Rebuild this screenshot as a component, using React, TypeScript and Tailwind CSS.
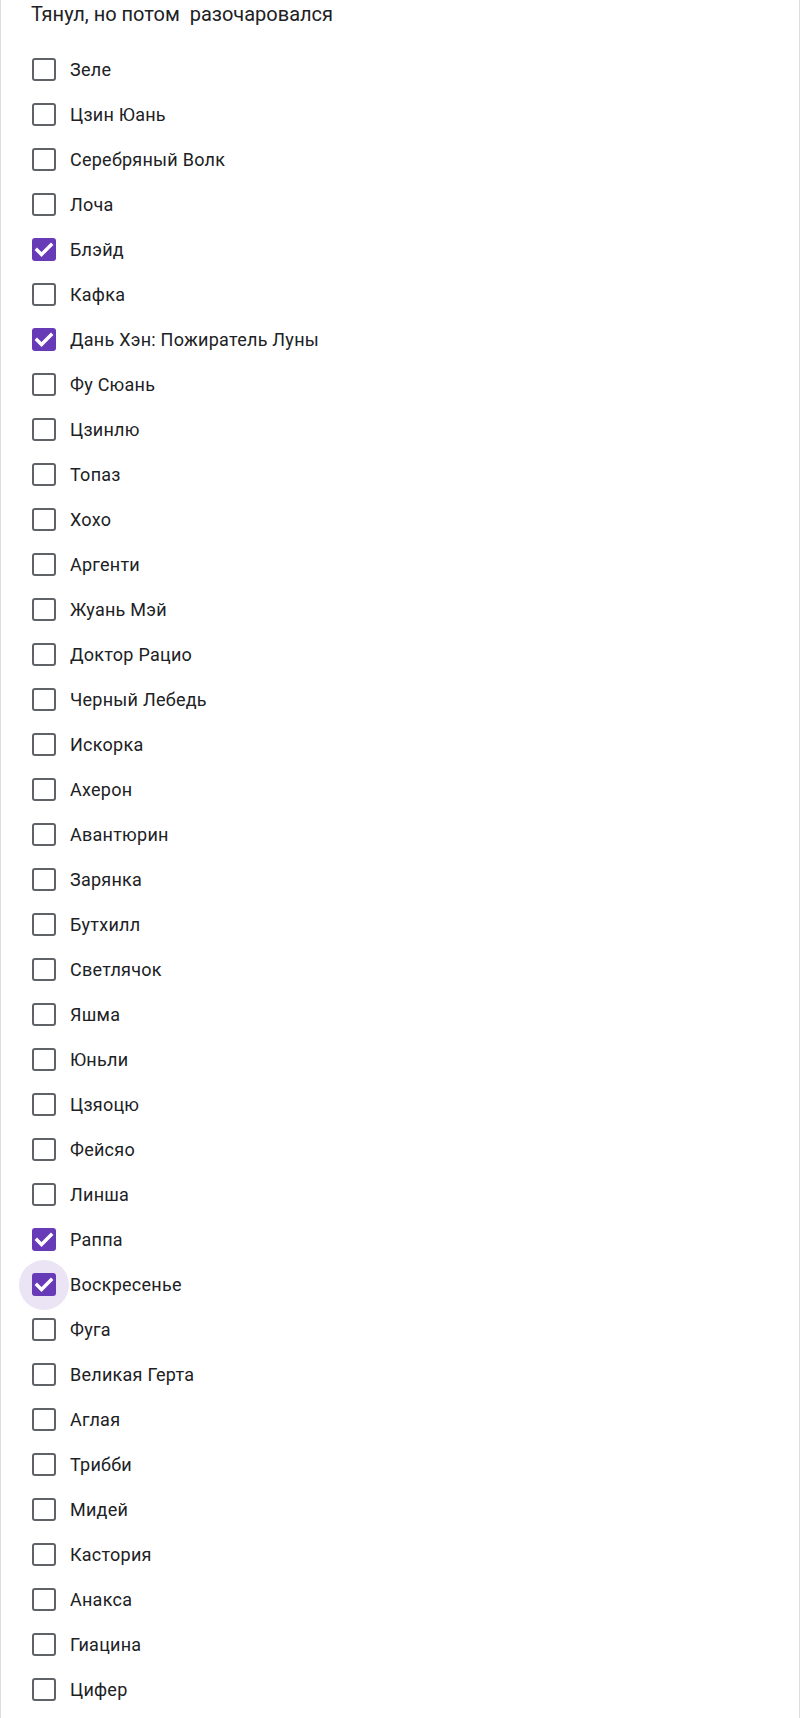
import React from 'react';

type Option = {
  label: string;
  checked?: boolean;
  focused?: boolean;
};

const options: Option[] = [
  { label: 'Зеле' },
  { label: 'Цзин Юань' },
  { label: 'Серебряный Волк' },
  { label: 'Лоча' },
  { label: 'Блэйд', checked: true },
  { label: 'Кафка' },
  { label: 'Дань Хэн: Пожиратель Луны', checked: true },
  { label: 'Фу Сюань' },
  { label: 'Цзинлю' },
  { label: 'Топаз' },
  { label: 'Хохо' },
  { label: 'Аргенти' },
  { label: 'Жуань Мэй' },
  { label: 'Доктор Рацио' },
  { label: 'Черный Лебедь' },
  { label: 'Искорка' },
  { label: 'Ахерон' },
  { label: 'Авантюрин' },
  { label: 'Зарянка' },
  { label: 'Бутхилл' },
  { label: 'Светлячок' },
  { label: 'Яшма' },
  { label: 'Юньли' },
  { label: 'Цзяоцю' },
  { label: 'Фейсяо' },
  { label: 'Линша' },
  { label: 'Раппа', checked: true },
  { label: 'Воскресенье', checked: true, focused: true },
  { label: 'Фуга' },
  { label: 'Великая Герта' },
  { label: 'Аглая' },
  { label: 'Трибби' },
  { label: 'Мидей' },
  { label: 'Кастория' },
  { label: 'Анакса' },
  { label: 'Гиацина' },
  { label: 'Цифер' },
];

function Checkbox({ checked, focused }: { checked?: boolean; focused?: boolean }) {
  return (
    <div className="relative flex h-[23px] w-[24px] shrink-0 items-center justify-center">
      {focused && <div className="absolute left-1/2 top-1/2 h-[50px] w-[50px] -translate-x-1/2 -translate-y-1/2 rounded-full bg-[#ebe4f5]" />}
      {checked ? (
        <div className="relative h-[23px] w-[24px] rounded-[3px] bg-[#673ab7]">
          <svg viewBox="0 0 24 23" className="h-[23px] w-[24px]" fill="none" stroke="white" strokeWidth="3.4" strokeLinecap="square">
            <path d="M5 12l4.5 4.5L19 7" />
          </svg>
        </div>
      ) : (
        <div className="relative h-[23px] w-[24px] rounded-[3px] border-[2.5px] border-[#5f6368]" />
      )}
    </div>
  );
}

export default function App() {
  return (
    <div className="min-h-[1718px] border-x border-[#dadce0] bg-white font-['Roboto',sans-serif] text-[#202124]">
      <div className="pl-[30px] pt-[2px] text-[20px] leading-[24px]">Тянул, но потом&nbsp; разочаровался</div>
      <div className="mt-[21px] flex flex-col">
        {options.map((option) => (
          <label key={option.label} className="flex h-[45px] items-center pl-[31px]">
            <Checkbox checked={option.checked} focused={option.focused} />
            <span className="ml-[14px] text-[18px] leading-[24px] tracking-[0.25px]">{option.label}</span>
          </label>
        ))}
      </div>
    </div>
  );
}
